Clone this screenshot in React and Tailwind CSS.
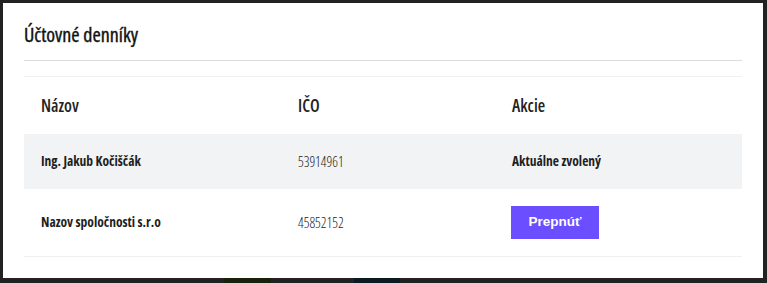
const rows = [
  { name: 'Ing. Jakub Kočiščák', ico: '53914961', current: true },
  { name: 'Nazov spoločnosti s.r.o', ico: '45852152', current: false },
];

export default function App() {
  return (
    <div className="h-[283px] w-[767px] overflow-hidden bg-[#222222] font-['Open_Sans',sans-serif] font-stretch-condensed">
      <div className="pl-[3px] pt-[3px]">
        <div className="h-[275px] w-[760px] bg-white px-[21px]">
          {/* Title */}
          <div className="border-b border-[#dcdcdc] pt-[18px] pb-[11px]">
            <h2 className="text-[20px] leading-[28px] font-medium text-[#111] [-webkit-text-stroke:0.35px_#111]">Účtovné denníky</h2>
          </div>

          {/* Table */}
          <div className="mt-[15px] border-t border-b border-[#f0f0f0]">
            <div className="flex h-[57px] items-center pl-[17px] text-[17px] font-semibold text-[#222]">
              <div className="w-[257px]">Názov</div>
              <div className="w-[214px]">IČO</div>
              <div className="flex-1">Akcie</div>
            </div>
            {rows.map((row) => (
              <div
                key={row.ico}
                className={`flex items-center pl-[17px] text-[13.5px] text-[#1f1f1f] ${row.current ? 'h-[55px] bg-[#f2f3f5]' : 'h-[67px]'}`}
              >
                <div className="w-[257px] font-bold">{row.name}</div>
                <div className="w-[214px] text-[14px] font-light text-[#222]">{row.ico}</div>
                <div className="flex-1">
                  {row.current ? (
                    <span className="font-bold">Aktuálne zvolený</span>
                  ) : (
                    <button className="-ml-px flex h-[33px] w-[88px] items-center justify-center bg-[#6b4eff] font-['Liberation_Sans',sans-serif] text-[13.5px] font-bold text-white">
                      Prepnúť
                    </button>
                  )}
                </div>
              </div>
            ))}
          </div>
        </div>
      </div>
      <div className="flex h-[5px]">
        <div className="w-[224px]" />
        <div className="w-[47px] bg-[#18200c]" />
        <div className="w-[83px]" />
        <div className="w-[46px] bg-[#0b1a1e]" />
      </div>
    </div>
  );
}
